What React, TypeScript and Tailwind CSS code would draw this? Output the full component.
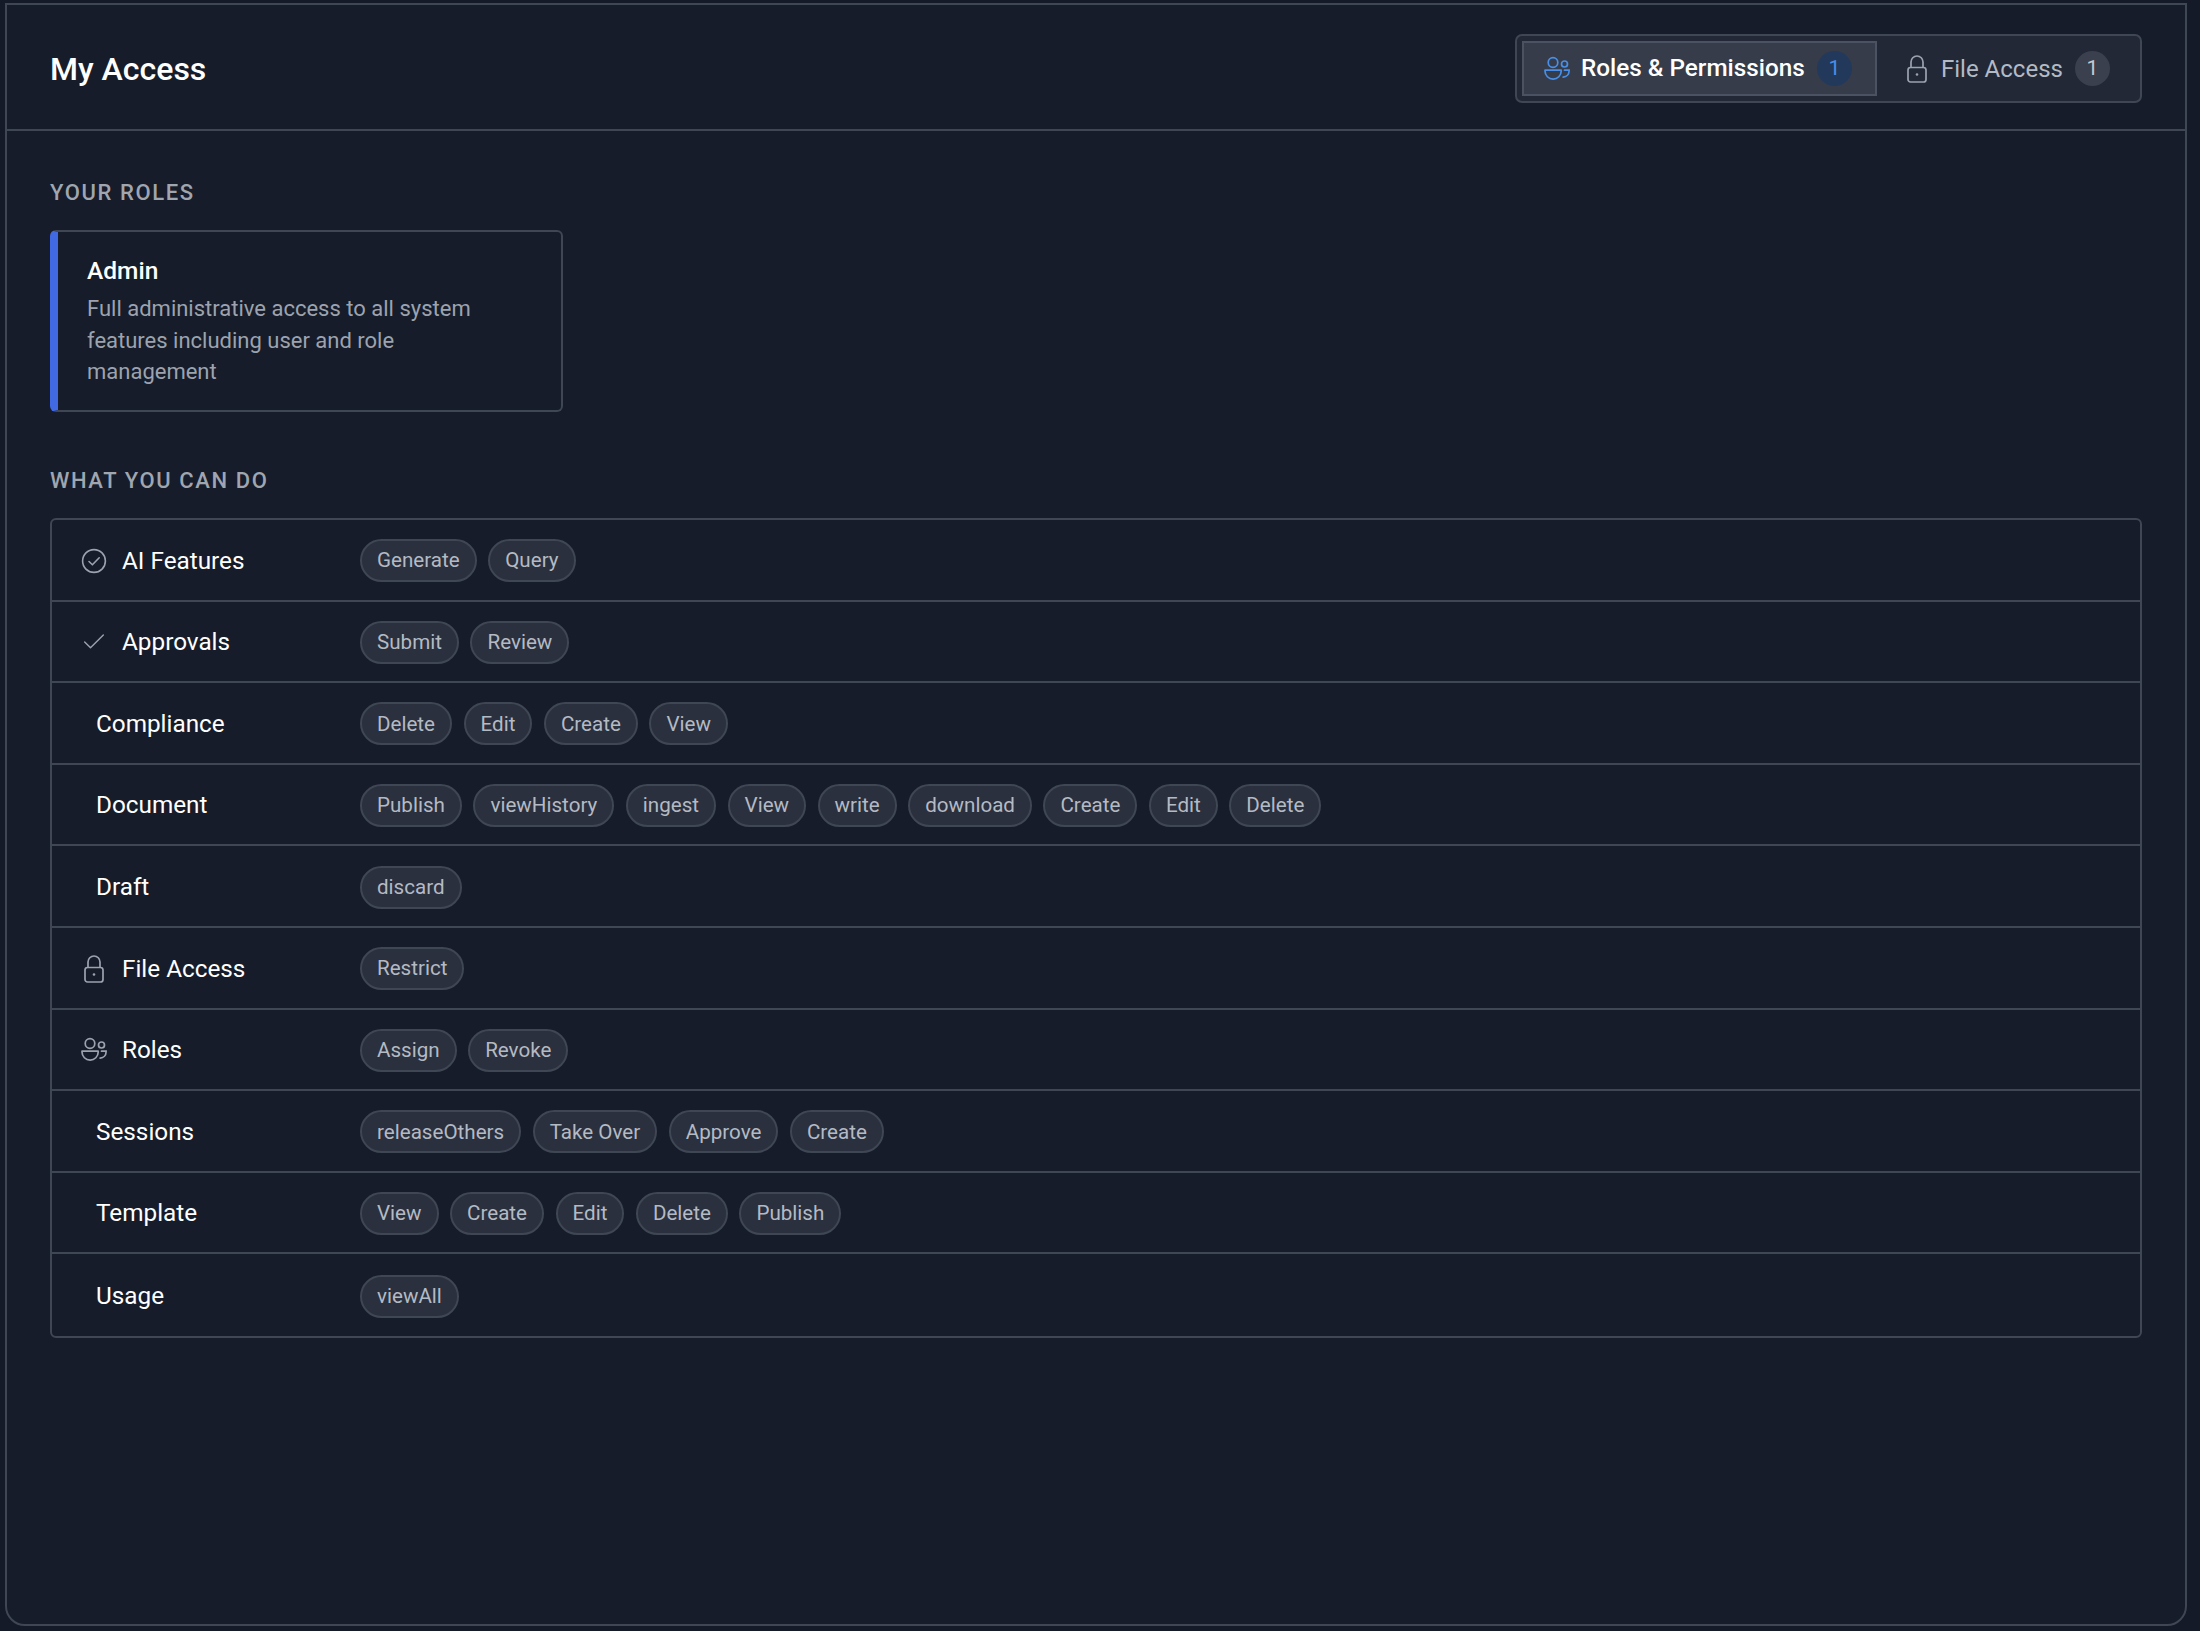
import { Check } from "lucide-react";

function RolesIcon({ className }: { className?: string }) {
  return (
    <svg viewBox="0 0 28 28" fill="none" stroke="currentColor" strokeWidth="1.7" className={className}>
      <circle cx="10" cy="7.5" r="4.8" />
      <circle cx="21.5" cy="9" r="3" />
      <path d="M2 15.2h16.2v.8a8.1 8.1 0 0 1-16.2 0z" strokeLinejoin="round" />
      <path d="M21.5 15.2h4.6v.6c0 3.6-2.6 6.2-6 6.4" strokeLinecap="round" />
    </svg>
  );
}

function LockIcon({ className }: { className?: string }) {
  return (
    <svg viewBox="0 0 28 28" fill="none" stroke="currentColor" strokeWidth="1.7" className={className}>
      <rect x="5" y="12.5" width="18" height="14.5" rx="2.5" />
      <path d="M8 12.5V7a6 6 0 0 1 12 0v5.5" />
      <circle cx="14" cy="19.5" r="1.3" fill="currentColor" stroke="none" />
    </svg>
  );
}

function CircleCheckIcon({ className }: { className?: string }) {
  return (
    <svg viewBox="0 0 28 28" fill="none" stroke="currentColor" strokeWidth="1.6" strokeLinecap="round" strokeLinejoin="round" className={className}>
      <circle cx="14" cy="14" r="11.4" />
      <path d="M9 14.5l3.4 3.3 6.8-7" />
    </svg>
  );
}

const rows = [
  { name: "AI Features", icon: "circle", perms: ["Generate", "Query"] },
  { name: "Approvals", icon: "check", perms: ["Submit", "Review"] },
  { name: "Compliance", perms: ["Delete", "Edit", "Create", "View"] },
  { name: "Document", perms: ["Publish", "viewHistory", "ingest", "View", "write", "download", "Create", "Edit", "Delete"] },
  { name: "Draft", perms: ["discard"] },
  { name: "File Access", icon: "lock", perms: ["Restrict"] },
  { name: "Roles", icon: "roles", perms: ["Assign", "Revoke"] },
  { name: "Sessions", perms: ["releaseOthers", "Take Over", "Approve", "Create"] },
  { name: "Template", perms: ["View", "Create", "Edit", "Delete", "Publish"] },
  { name: "Usage", perms: ["viewAll"] },
];

function RowIcon({ icon }: { icon?: string }) {
  const cls = "w-7 h-7 text-[#9ca3af]";
  if (icon === "circle") return <CircleCheckIcon className={cls} />;
  if (icon === "check") return <Check className={cls} strokeWidth={1.2} />;
  if (icon === "lock") return <LockIcon className={cls} />;
  if (icon === "roles") return <RolesIcon className={cls} />;
  return null;
}

export default function App() {
  return (
    <div className="min-h-[1631px] bg-[#141a27] pl-[5px] pr-[13px] pt-[3px] pb-[5px] flex font-['Roboto',sans-serif]">
      <div className="flex-1 flex flex-col bg-[#161c29] border-2 border-[#3f4654] rounded-b-[20px]">
        {/* Header */}
        <div className="h-[126px] shrink-0 border-b-2 border-[#3f4654] flex items-center justify-between pt-[3px] pl-[43px] pr-[43px]">
          <h1 className="text-[32px] font-medium text-white">My Access</h1>
          <div className="w-[627px] h-[69px] flex items-center gap-[6px] px-[5px] bg-[#222836] border-2 border-[#3f4654] rounded-[7px]">
            <button className="w-[355px] h-[55px] flex items-center pl-[19px] bg-[#363c49] border-2 border-[#4b5261] text-white">
              <RolesIcon className="w-7 h-7 text-[#4a8fe7]" />
              <span className="ml-[10px] text-[24.3px] font-medium">Roles &amp; Permissions</span>
              <span className="ml-[12px] w-[35px] h-[35px] rounded-full bg-[#23395c] text-[#4a8fe7] text-[21px] flex items-center justify-center">1</span>
            </button>
            <button className="flex items-center pl-[20px] text-[#b4bac4]">
              <LockIcon className="w-7 h-7 text-[#9ca3af]" />
              <span className="ml-[10px] text-[24px]">File Access</span>
              <span className="ml-[12px] w-[35px] h-[35px] rounded-full bg-[#3a404d] text-[#c6cad2] text-[21px] flex items-center justify-center">1</span>
            </button>
          </div>
        </div>

        <div className="pl-[43px] pr-[43px]">
          {/* Roles */}
          <h2 className="mt-[48px] text-[22px] leading-[28px] font-medium tracking-[1.6px] text-[#a0a6b0]">YOUR ROLES</h2>
          <div className="mt-[23px] w-[513px] h-[182px] border-2 border-l-[8px] border-[#3f4654] border-l-[#4169e1] rounded-[6px] pl-[29px] pt-[23px]">
            <div className="text-[24.5px] leading-[32px] font-medium text-white">Admin</div>
            <p className="mt-[6px] w-[410px] text-[22px] leading-[31.5px] text-[#9ca3af]">
              Full administrative access to all system features including user and role management
            </p>
          </div>

          {/* Permissions */}
          <h2 className="mt-[55px] text-[22px] leading-[28px] font-medium tracking-[1.6px] text-[#a0a6b0]">WHAT YOU CAN DO</h2>
          <div className="mt-[23px] border-2 border-[#3f4654] rounded-[6px]">
            {rows.map((row) => (
              <div key={row.name} className="h-[81.6px] pt-[2px] flex items-center border-b-2 border-[#3f4654] last:border-b-0">
                <div className={`w-[308px] shrink-0 flex items-center text-[24.3px] font-[450] text-white ${row.icon ? "pl-[28px] gap-[14px]" : "pl-[44px]"}`}>
                  <RowIcon icon={row.icon} />
                  <span>{row.name}</span>
                </div>
                <div className="flex gap-[11.5px]">
                  {row.perms.map((p) => (
                    <span key={p} className="h-[43px] px-[15px] flex items-center rounded-full bg-[#2a303d] border-2 border-[#3f4654] text-[20.6px] text-[#b4bac4]">
                      {p}
                    </span>
                  ))}
                </div>
              </div>
            ))}
          </div>
        </div>
      </div>
    </div>
  );
}
